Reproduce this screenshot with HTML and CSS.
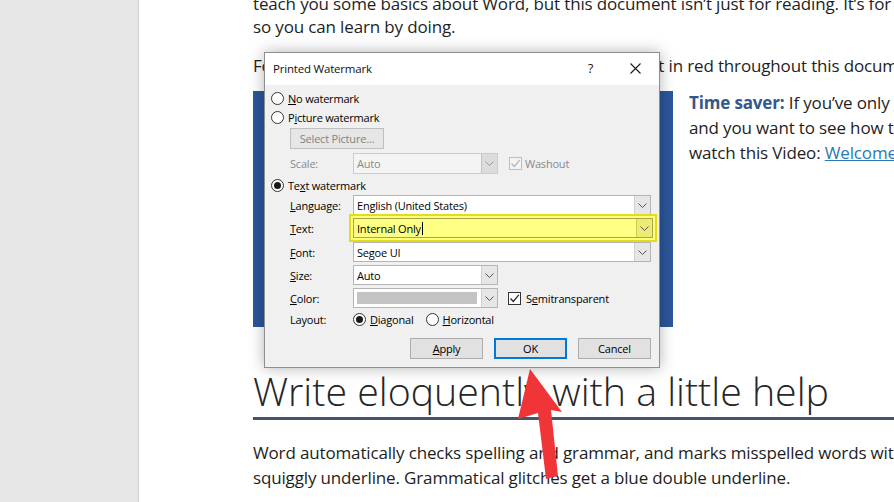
FILE: index.html
```html
<!DOCTYPE html>
<html lang="en">
<head>
<meta charset="utf-8">
<title>Printed Watermark</title>
<link rel="stylesheet" href="styles.css">
</head>
<body>
<div class="app">
  <aside class="nav"></aside>
  <main class="page">
    <p class="para intro">
      <span class="ln">teach you some basics about Word, but this document isn’t just for reading. It’s for you to edit</span>
      <span class="ln">so you can learn by doing.</span>
    </p>
    <p class="para second">
      <span class="ln">For practice hints and tips as you go, look for the text in red throughout this document. Then try it.</span>
    </p>
    <div class="callout">
      <div class="video"></div>
      <div class="tip">
        <span class="ln"><b class="accent">Time saver:</b> If you’ve only got a minute</span>
        <span class="ln">and you want to see how this works,</span>
        <span class="ln">watch this Video: <a class="link">Welcome to Word</a></span>
      </div>
    </div>
    <h1 class="heading">Write eloquently with a little help</h1>
    <p class="para last">
      <span class="ln">Word automatically checks spelling and grammar, and marks misspelled words with a red</span>
      <span class="ln">squiggly underline. Grammatical glitches get a blue double underline.</span>
    </p>
  </main>
</div>

<div class="dialog">
  <div class="titlebar">
    <span class="title">Printed Watermark</span>
    <span class="tb-btn help">?</span>
    <span class="tb-btn close">
      <svg width="11" height="11" viewBox="0 0 11 11"><path d="M0.5 0.5 L10.5 10.5 M10.5 0.5 L0.5 10.5" stroke="#1a1a1a" stroke-width="1.1" fill="none"/></svg>
    </span>
  </div>
  <div class="dlg-body">
    <div class="opt"><span class="radio"></span><span><u>N</u>o watermark</span></div>
    <div class="opt"><span class="radio"></span><span>P<u>i</u>cture watermark</span></div>
    <div class="btn btn-select disabled">Select Picture...</div>
    <div class="field scale">
      <span class="lbl disabled-text">Scale:</span>
      <div class="combo narrow off"><span class="val">Auto</span><span class="drop"><svg width="9" height="5" viewBox="0 0 9 5"><path d="M0.5 0.5 L4.5 4.5 L8.5 0.5" stroke="#9a9a9a" fill="none"/></svg></span></div>
      <span class="check off"><svg width="11" height="11" viewBox="0 0 11 11"><path d="M1.5 5.5 L4.3 8.5 L9.8 1.8" stroke="#b5b5b5" stroke-width="1.2" fill="none"/></svg></span>
      <span class="disabled-text">Washout</span>
    </div>
    <div class="opt textwm"><span class="radio on"></span><span>Te<u>x</u>t watermark</span></div>
    <div class="field lang">
      <span class="lbl"><u>L</u>anguage:</span>
      <div class="combo wide"><span class="val">English (United States)</span><span class="drop"><svg width="9" height="5" viewBox="0 0 9 5"><path d="M0.5 0.5 L4.5 4.5 L8.5 0.5" stroke="#555" fill="none"/></svg></span></div>
    </div>
    <div class="field text">
      <span class="lbl"><u>T</u>ext:</span>
      <div class="hl">
        <div class="combo wide hl-combo"><span class="val">Internal Only<span class="caret"></span></span><span class="drop"><svg width="9" height="5" viewBox="0 0 9 5"><path d="M0.5 0.5 L4.5 4.5 L8.5 0.5" stroke="#555" fill="none"/></svg></span></div>
      </div>
    </div>
    <div class="field font">
      <span class="lbl"><u>F</u>ont:</span>
      <div class="combo wide"><span class="val">Segoe UI</span><span class="drop"><svg width="9" height="5" viewBox="0 0 9 5"><path d="M0.5 0.5 L4.5 4.5 L8.5 0.5" stroke="#555" fill="none"/></svg></span></div>
    </div>
    <div class="field size">
      <span class="lbl"><u>S</u>ize:</span>
      <div class="combo narrow"><span class="val">Auto</span><span class="drop"><svg width="9" height="5" viewBox="0 0 9 5"><path d="M0.5 0.5 L4.5 4.5 L8.5 0.5" stroke="#555" fill="none"/></svg></span></div>
    </div>
    <div class="field color">
      <span class="lbl"><u>C</u>olor:</span>
      <div class="combo narrow"><span class="swatch"></span><span class="drop"><svg width="9" height="5" viewBox="0 0 9 5"><path d="M0.5 0.5 L4.5 4.5 L8.5 0.5" stroke="#555" fill="none"/></svg></span></div>
      <span class="check semi"><svg width="11" height="11" viewBox="0 0 11 11"><path d="M1.5 5.5 L4.3 8.5 L9.8 1.8" stroke="#222" stroke-width="1.2" fill="none"/></svg></span>
      <span>S<u>e</u>mitransparent</span>
    </div>
    <div class="field layout">
      <span class="lbl">Layout:</span>
      <span class="radio on"></span><span class="rlabel"><u>D</u>iagonal</span>
      <span class="radio second-radio"></span><span class="rlabel"><u>H</u>orizontal</span>
    </div>
    <div class="buttons">
      <div class="btn"><u>A</u>pply</div>
      <div class="btn default">OK</div>
      <div class="btn">Cancel</div>
    </div>
  </div>
</div>

<svg class="arrow" width="894" height="502" viewBox="0 0 894 502">
  <polygon points="530,369 562,412 551,410 558,476 546,479 538,413 518,419" fill="#ef3538"/>
</svg>
</body>
</html>
```

FILE: styles.css
```css
* { box-sizing: border-box; }

html, body {
  margin: 0;
  padding: 0;
}

body {
  width: 894px;
  height: 502px;
  overflow: hidden;
  position: relative;
  background: #ffffff;
  font-family: "Open Sans", "Noto Sans", sans-serif;
}

.app {
  display: flex;
  width: 894px;
  height: 502px;
}

.nav {
  width: 139px;
  flex: none;
  background: #e6e6e6;
  border-right: 1px solid #cfcfcf;
}

.page {
  flex: 1;
  min-width: 0;
  overflow: hidden;
  background: #ffffff;
  padding-left: 114px;
  color: #1e1e1e;
}

.para {
  margin: 0;
  font-size: 17px;
  letter-spacing: -0.15px;
  line-height: 23px;
}

.ln {
  display: block;
  white-space: nowrap;
}

.intro {
  margin-top: -8px;
}

.second {
  margin-top: 16px;
}

.callout {
  display: flex;
  margin-top: 14px;
}

.video {
  width: 420px;
  height: 236px;
  flex: none;
  background: #2b579a;
}

.tip {
  margin-left: 16px;
  margin-top: -1px;
  font-size: 17px;
  letter-spacing: -0.15px;
  line-height: 25px;
  white-space: nowrap;
}

.accent {
  color: #34578d;
  font-weight: 700;
}

.link {
  color: #2b79b0;
  text-decoration: underline;
}

.heading {
  margin: 40px 0 0 0;
  font-size: 39.3px;
  font-weight: 300;
  line-height: 48px;
  color: #262626;
  white-space: nowrap;
  padding-bottom: 2px;
  border-bottom: 3px solid #44546a;
}

.last {
  margin-top: 20px;
  line-height: 25px;
}

/* ---------- dialog ---------- */

.dialog {
  position: absolute;
  left: 264px;
  top: 52px;
  width: 396px;
  height: 316px;
  border: 1px solid #8e8e8e;
  background: #f0f0f0;
  box-shadow: 0 0 14px rgba(0, 0, 0, 0.3);
  font-family: "Open Sans", "Noto Sans", sans-serif;
  font-size: 11px;
  letter-spacing: -0.2px;
  color: #000;
}

.titlebar {
  height: 32px;
  background: #ffffff;
  display: flex;
  align-items: center;
  padding-left: 8px;
  padding-right: 1px;
  padding-bottom: 2px;
}

.title {
  flex: 1;
  font-size: 11.5px;
  color: #111;
}

.tb-btn {
  width: 45px;
  height: 30px;
  display: flex;
  align-items: center;
  justify-content: center;
}

.help {
  font-size: 13px;
  color: #222;
}

.dlg-body {
  padding: 4px 8px 0 6px;
}

.opt {
  display: flex;
  align-items: center;
  height: 19px;
  gap: 4px;
}

.radio {
  width: 13px;
  height: 13px;
  flex: none;
  border: 1px solid #333;
  border-radius: 50%;
  background: #fff;
  display: inline-flex;
  align-items: center;
  justify-content: center;
}

.radio.on::after {
  content: "";
  width: 7px;
  height: 7px;
  border-radius: 50%;
  background: #1a1a1a;
}

.btn {
  width: 73px;
  height: 21px;
  display: flex;
  align-items: center;
  justify-content: center;
  background: #e1e1e1;
  border: 1px solid #adadad;
  color: #000;
}

.btn-select {
  width: 94px;
  margin: 1px 0 0 19px;
  border-color: #bfbfbf;
  background: #cccccc;
}

.btn.disabled {
  color: #838383;
  background: #e6e6e6;
}

.field {
  display: flex;
  align-items: center;
  margin-left: 19px;
  height: 20px;
}

.lbl {
  width: 63px;
  flex: none;
}

.scale { margin-top: 4px; height: 21px; }
.textwm { margin-top: 2px; }
.lang { margin-top: 0; }
.text { margin-top: 3px; }
.font { margin-top: 4px; }
.size { margin-top: 3px; }
.color { margin-top: 3px; }
.layout { margin-top: 1px; }

.disabled-text {
  color: #8a8a8a;
}

.combo {
  height: 100%;
  display: flex;
  align-items: stretch;
  background: #ffffff;
  border: 1px solid #b4b4b4;
}

.combo.narrow { width: 145px; }
.combo.wide { width: 300px; }

.combo.off {
  background: #f4f4f4;
  border-color: #cccccc;
  color: #8a8a8a;
}

.val {
  flex: 1;
  display: flex;
  align-items: center;
  padding-left: 3px;
  white-space: nowrap;
}

.drop {
  width: 16px;
  flex: none;
  display: flex;
  align-items: center;
  justify-content: center;
  background: #e6e6e6;
  border-left: 1px solid #d0d0d0;
}

.combo.off .drop {
  background: #dcdcdc;
  border-left-color: #c4c4c4;
}

.swatch {
  flex: 1;
  margin: 3px 4px 3px 3px;
  background: #c3c3c3;
}

.check {
  width: 13px;
  height: 13px;
  flex: none;
  border: 1px solid #333;
  background: #fff;
  display: inline-flex;
  align-items: center;
  justify-content: center;
  margin-right: 4px;
}

.check.off {
  border-color: #bdbdbd;
  background: #f4f4f4;
  margin-left: 11px;
  margin-right: 3px;
}

.check.semi {
  margin-left: 10px;
  margin-right: 5px;
}

.hl {
  margin: -4px;
  padding: 2px;
  background: #ffff7a;
  border: 2px solid #e3dc1a;
}

.combo.hl-combo {
  height: 20px;
  background: #ffff84;
  border-color: #a9a64a;
}

.combo.hl-combo .drop {
  background: #ecec74;
  border-left-color: #cfcc55;
}

.caret {
  display: inline-block;
  width: 1px;
  height: 13px;
  background: #000;
  margin-left: 1px;
}

.rlabel {
  margin-left: 4px;
}

.second-radio {
  margin-left: 12px;
}

.buttons {
  display: flex;
  justify-content: flex-end;
  gap: 11px;
  margin-top: 9px;
  padding-right: 0;
}

.btn.default {
  border: 2px solid #0078d7;
}

.arrow {
  position: absolute;
  left: 0;
  top: 0;
  pointer-events: none;
}
```
